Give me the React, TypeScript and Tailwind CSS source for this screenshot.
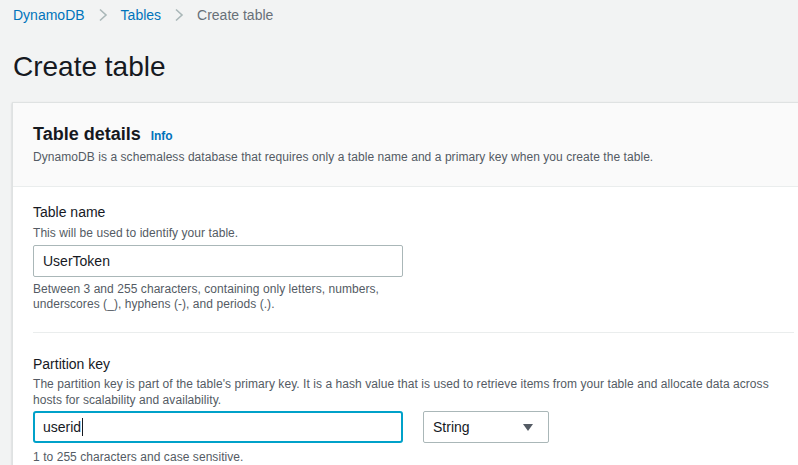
import React from "react";

function Chevron() {
  return (
    <svg width="10" height="14" viewBox="0 0 10 14" className="mx-[13px]">
      <path d="M2 1.5 L8 7 L2 12.5" fill="none" stroke="#aab7b8" strokeWidth="1.6" />
    </svg>
  );
}

export default function App() {
  return (
    <div
      className="w-[798px] h-[465px] overflow-hidden bg-[#f2f3f3] text-[#16191f]"
      style={{ fontFamily: '"Liberation Sans", Arial, sans-serif' }}
    >
      <div className="flex items-center pl-[13px] pt-[5px] h-[25px] text-[14px] leading-[20px]">
        <span className="text-[#0073bb]">DynamoDB</span>
        <Chevron />
        <span className="text-[#0073bb]">Tables</span>
        <Chevron />
        <span className="text-[#687078]">Create table</span>
      </div>
      <h1 className="mt-[24px] pl-[13px] text-[28px] leading-[36px] font-normal text-[#16191f]">
        Create table
      </h1>
      <div className="mt-[17px] ml-[12px] w-[802px] border-l border-t border-[#dfe2e2] shadow-[0_1px_2px_rgba(0,28,36,0.2)] bg-white">
        <div className="bg-[#fafafa] border-b border-[#eaeded] pl-[20px] pr-[20px] pt-[19px] pb-[21px]">
          <div className="flex items-baseline">
            <span className="text-[18px] leading-[24px] font-bold">Table details</span>
            <span className="ml-[10px] text-[12px] font-bold text-[#0073bb]">Info</span>
          </div>
          <div className="mt-[3px] text-[12px] leading-[16px] tracking-[0.06px] text-[#545b64]">
            DynamoDB is a schemaless database that requires only a table name and a primary key when you create the table.
          </div>
        </div>
        <div className="pl-[20px] pr-[20px]">
          <div className="pt-[15px] pb-[20px] border-b border-[#eaeded]">
            <div className="text-[14px] leading-[20px]">Table name</div>
            <div className="mt-[3px] text-[12px] leading-[16px] tracking-[0.06px] text-[#545b64]">This will be used to identify your table.</div>
            <div className="mt-[4px] w-[370px] h-[32px] border border-[#aab7b8] rounded-[2px] bg-white flex items-center pl-[9px] text-[14px]">
              UserToken
            </div>
            <div className="mt-[5px] w-[370px] text-[12px] leading-[15px] tracking-[0.06px] text-[#545b64]">
              Between 3 and 255 characters, containing only letters, numbers, underscores (_), hyphens (-), and periods (.).
            </div>
          </div>
          <div className="pt-[21px]">
            <div className="text-[14px] leading-[20px]">Partition key</div>
            <div className="mt-[2px] w-[752px] text-[12px] leading-[16px] tracking-[0.06px] text-[#545b64]">
              The partition key is part of the table's primary key. It is a hash value that is used to retrieve items from your table and allocate data across hosts for scalability and availability.
            </div>
            <div className="mt-[3px] flex gap-[20px]">
              <div className="w-[370px] h-[32px] border-2 border-[#00a1c9] rounded-[3px] bg-white flex items-center pl-[8px] text-[14px]">
                userid<span className="inline-block w-px h-[18px] bg-[#16191f] ml-px" />
              </div>
              <div className="w-[126px] h-[32px] border border-[#aab7b8] rounded-[2px] bg-white flex items-center justify-between pl-[9px] pr-[15px] text-[14px]">
                <span>String</span>
                <svg width="10" height="7" viewBox="0 0 10 7">
                  <polygon points="0,0 10,0 5,7" fill="#545b64" />
                </svg>
              </div>
            </div>
            <div className="mt-[6px] text-[12px] leading-[16px] tracking-[0.06px] text-[#545b64]">1 to 255 characters and case sensitive.</div>
          </div>
        </div>
      </div>
    </div>
  );
}
